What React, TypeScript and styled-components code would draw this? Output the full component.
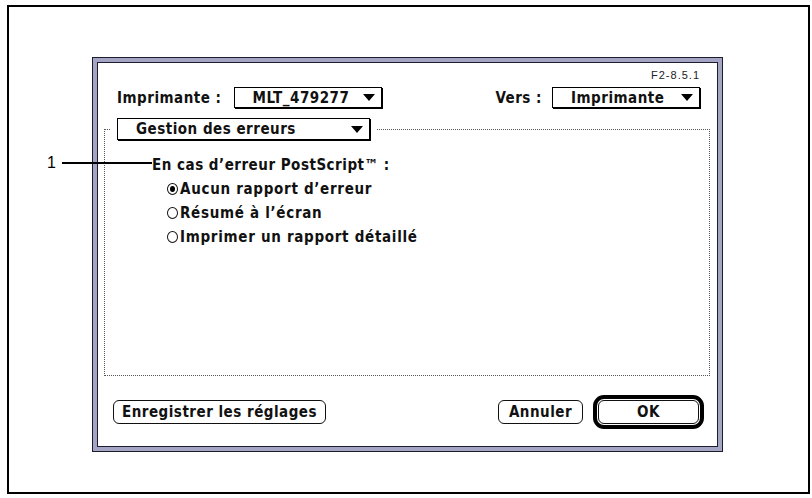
import React from "react";
import styled, { createGlobalStyle, css } from "styled-components";

const GlobalStyle = createGlobalStyle`
  html, body { margin: 0; padding: 0; background: #fff; }
  body { font-family: "DejaVu Sans Condensed", "DejaVu Sans", sans-serif; color: #111; }
`;

const macText = css`
  font-family: "DejaVu Sans Condensed", "DejaVu Sans", sans-serif;
  font-stretch: condensed;
  font-weight: 700;
  font-size: 15px;
  letter-spacing: 0.5px;
  color: #111;
  white-space: nowrap;
`;

const Page = styled.div`
  padding: 5px 0 0 7px;
`;

const Frame = styled.div`
  position: relative;
  box-sizing: border-box;
  width: 803px;
  height: 489px;
  border: 2px solid #000;
  padding: 50px 0 0 83px;
`;

const DialogFrame = styled.div`
  box-sizing: border-box;
  width: 631px;
  height: 395px;
  border: 1px solid #1c1c2c;
  background: #a4a4c4;
  padding: 4px;
`;

const DialogBody = styled.div`
  box-sizing: border-box;
  height: 100%;
  border: 1px solid #1c1c2c;
  background: #fff;
  display: flex;
  flex-direction: column;
`;

const Version = styled.div`
  margin-top: 6px;
  height: 12px;
  line-height: 12px;
  padding-right: 17px;
  text-align: right;
  font-family: "Liberation Sans", Arial, sans-serif;
  font-size: 11px;
  letter-spacing: 1px;
  color: #222;
`;

const PrinterRow = styled.div`
  display: flex;
  justify-content: space-between;
  align-items: center;
  margin-top: 6px;
  height: 21px;
  padding: 0 17px 0 19px;
`;

const Field = styled.div<{ $gap: number }>`
  display: flex;
  align-items: center;
  gap: ${(p) => p.$gap}px;
`;

const Label = styled.span`
  ${macText}
`;

const Popup = styled.div<{ $width: number; $height: number }>`
  box-sizing: border-box;
  width: ${(p) => p.$width}px;
  height: ${(p) => p.$height}px;
  border: 1px solid #000;
  box-shadow: 1px 1px 0 #000;
  background: #fff;
  display: flex;
  align-items: center;
  justify-content: space-between;
  padding: 0 6px 0 18px;
  ${macText}
`;

const Arrow = () => (
  <svg width="12" height="7" viewBox="0 0 12 7">
    <polygon points="0,0 12,0 6,7" fill="#000" />
  </svg>
);

const Group = styled.fieldset`
  box-sizing: border-box;
  height: 258px;
  margin: 10px 7px 0 6px;
  padding: 0;
  border: 1px dotted #555;
  min-width: 0;
`;

const GroupLegend = styled.legend`
  margin-left: 5px;
  padding: 0 6px 0 7px;
`;

const GroupContent = styled.div`
  padding: 16px 0 0 47px;
`;

const Title = styled.div`
  ${macText}
  height: 18px;
  line-height: 18px;
`;

const RadioList = styled.div`
  display: flex;
  flex-direction: column;
  margin: 3px 0 0 15px;
`;

const RadioRow = styled.div`
  display: flex;
  align-items: center;
  gap: 2px;
  height: 24px;
  ${macText}
  letter-spacing: 0.7px;
`;

const RadioDot = styled.span<{ $checked?: boolean }>`
  box-sizing: border-box;
  width: 11px;
  height: 12px;
  border: 1px solid #111;
  border-radius: 50%;
  display: inline-flex;
  align-items: center;
  justify-content: center;
  &::after {
    content: "";
    display: ${(p) => (p.$checked ? "block" : "none")};
    width: 5px;
    height: 6px;
    border-radius: 50%;
    background: #000;
  }
`;

const ButtonRow = styled.div`
  display: flex;
  align-items: center;
  margin-top: 19px;
  height: 34px;
  padding: 0 13px 0 15px;
`;

const MacButton = styled.div<{ $width: number; $push?: boolean }>`
  box-sizing: border-box;
  width: ${(p) => p.$width}px;
  height: 24px;
  border: 1px solid #111;
  border-radius: 6px;
  background: #fff;
  display: flex;
  align-items: center;
  justify-content: center;
  margin-left: ${(p) => (p.$push ? "auto" : "0")};
  ${macText}
`;

const DefaultRing = styled.div`
  display: flex;
  border: 4px solid #000;
  border-radius: 11px;
  padding: 1px;
  margin-left: 10px;
`;

const Callout = styled.div`
  position: absolute;
  left: 38px;
  top: 145px;
  height: 22px;
  display: flex;
  align-items: center;
`;

const CalloutNumber = styled.span`
  font-family: "Liberation Sans", Arial, sans-serif;
  font-size: 16px;
  color: #000;
`;

const CalloutLine = styled.span`
  display: block;
  width: 90px;
  height: 2px;
  margin-left: 6px;
  background: #000;
`;

const radios = [
  { label: "Aucun rapport d\u2019erreur", checked: true },
  { label: "R\u00e9sum\u00e9 \u00e0 l\u2019\u00e9cran", checked: false },
  { label: "Imprimer un rapport d\u00e9taill\u00e9", checked: false },
];

export default function App() {
  return (
    <>
      <GlobalStyle />
      <Page>
        <Frame>
          <DialogFrame>
            <DialogBody>
              <Version>F2-8.5.1</Version>
              <PrinterRow>
                <Field $gap={12}>
                  <Label>Imprimante :</Label>
                  <Popup $width={148} $height={21}>
                    <span>MLT_479277</span>
                    <Arrow />
                  </Popup>
                </Field>
                <Field $gap={10}>
                  <Label>Vers :</Label>
                  <Popup $width={148} $height={21}>
                    <span>Imprimante</span>
                    <Arrow />
                  </Popup>
                </Field>
              </PrinterRow>
              <Group>
                <GroupLegend>
                  <Popup $width={253} $height={22}>
                    <span>Gestion des erreurs</span>
                    <Arrow />
                  </Popup>
                </GroupLegend>
                <GroupContent>
                  <Title>En cas d’erreur PostScript™ :</Title>
                  <RadioList>
                    {radios.map((r) => (
                      <RadioRow key={r.label}>
                        <RadioDot $checked={r.checked} />
                        <span>{r.label}</span>
                      </RadioRow>
                    ))}
                  </RadioList>
                </GroupContent>
              </Group>
              <ButtonRow>
                <MacButton $width={213}>Enregistrer les réglages</MacButton>
                <MacButton $width={85} $push>
                  Annuler
                </MacButton>
                <DefaultRing>
                  <MacButton $width={101}>OK</MacButton>
                </DefaultRing>
              </ButtonRow>
            </DialogBody>
          </DialogFrame>
          <Callout>
            <CalloutNumber>1</CalloutNumber>
            <CalloutLine />
          </Callout>
        </Frame>
      </Page>
    </>
  );
}
